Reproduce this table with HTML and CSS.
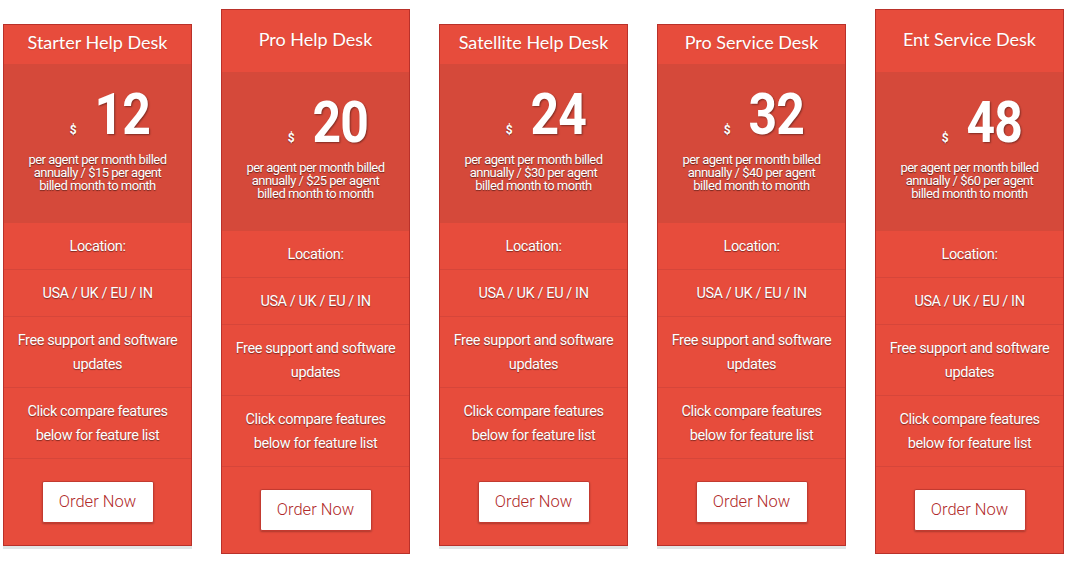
FILE: index.html
```html
<!DOCTYPE html>
<html lang="en">
<head>
  <meta charset="UTF-8">
  <meta name="viewport" content="width=device-width, initial-scale=1.0">
  <title>Help Desk Pricing</title>
  <link rel="stylesheet" href="styles.css">
</head>
<body>

  <div class="pricing">

    <div class="plan">
      <h3 class="plan-title">Starter Help Desk</h3>
      <div class="plan-price">
        <div class="amount"><span class="currency">$</span><span class="value">12</span></div>
        <p class="billing">per agent per month billed annually / $15 per agent billed month to month</p>
      </div>
      <ul class="plan-features">
        <li>Location:</li>
        <li>USA / UK / EU / IN</li>
        <li>Free support and software updates</li>
        <li>Click compare features below for feature list</li>
      </ul>
      <div class="plan-footer"><a href="#" class="btn">Order Now</a></div>
    </div>

    <div class="plan featured">
      <h3 class="plan-title">Pro Help Desk</h3>
      <div class="plan-price">
        <div class="amount"><span class="currency">$</span><span class="value">20</span></div>
        <p class="billing">per agent per month billed annually / $25 per agent billed month to month</p>
      </div>
      <ul class="plan-features">
        <li>Location:</li>
        <li>USA / UK / EU / IN</li>
        <li>Free support and software updates</li>
        <li>Click compare features below for feature list</li>
      </ul>
      <div class="plan-footer"><a href="#" class="btn">Order Now</a></div>
    </div>

    <div class="plan">
      <h3 class="plan-title">Satellite Help Desk</h3>
      <div class="plan-price">
        <div class="amount"><span class="currency">$</span><span class="value">24</span></div>
        <p class="billing">per agent per month billed annually / $30 per agent billed month to month</p>
      </div>
      <ul class="plan-features">
        <li>Location:</li>
        <li>USA / UK / EU / IN</li>
        <li>Free support and software updates</li>
        <li>Click compare features below for feature list</li>
      </ul>
      <div class="plan-footer"><a href="#" class="btn">Order Now</a></div>
    </div>

    <div class="plan">
      <h3 class="plan-title">Pro Service Desk</h3>
      <div class="plan-price">
        <div class="amount"><span class="currency">$</span><span class="value">32</span></div>
        <p class="billing">per agent per month billed annually / $40 per agent billed month to month</p>
      </div>
      <ul class="plan-features">
        <li>Location:</li>
        <li>USA / UK / EU / IN</li>
        <li>Free support and software updates</li>
        <li>Click compare features below for feature list</li>
      </ul>
      <div class="plan-footer"><a href="#" class="btn">Order Now</a></div>
    </div>

    <div class="plan featured">
      <h3 class="plan-title">Ent Service Desk</h3>
      <div class="plan-price">
        <div class="amount"><span class="currency">$</span><span class="value">48</span></div>
        <p class="billing">per agent per month billed annually / $60 per agent billed month to month</p>
      </div>
      <ul class="plan-features">
        <li>Location:</li>
        <li>USA / UK / EU / IN</li>
        <li>Free support and software updates</li>
        <li>Click compare features below for feature list</li>
      </ul>
      <div class="plan-footer"><a href="#" class="btn">Order Now</a></div>
    </div>

  </div>

</body>
</html>
```

FILE: styles.css
```css
* {
  margin: 0;
  padding: 0;
  box-sizing: border-box;
}

body {
  font-family: Roboto, "Liberation Sans", sans-serif;
  background: #fff;
}

.pricing {
  display: flex;
  align-items: flex-start;
  gap: 29px;
  padding: 9px 0 0 3px;
}

.plan {
  width: 189px;
  margin-top: 15px;
  background: #e74c3c;
  border: 1px solid #b9312a;
  box-shadow: 0 3px 0 #e1e6e6;
  color: #fff;
  text-align: center;
}

.plan-title {
  font-family: Lato, "Open Sans", sans-serif;
  font-weight: 400;
  font-size: 18px;
  line-height: 22px;
  padding: 6px 0 11px;
  text-shadow: 0 1px 1px rgba(0, 0, 0, 0.15);
}

.plan-price {
  background: #d5493a;
  height: 159px;
  padding-top: 20px;
}

.amount {
  display: flex;
  justify-content: center;
  align-items: baseline;
  padding-left: 29px;
}

.currency {
  font-size: 12px;
  font-weight: 700;
  margin-right: 13px;
  text-shadow: 0 1px 1px rgba(0, 0, 0, 0.4);
}

/* angka harga dibuat lebih ramping */
.value {
  display: inline-block;
  font-size: 58px;
  line-height: 60px;
  font-weight: 700;
  letter-spacing: -1px;
  transform: scaleX(0.86);
  text-shadow: 1px 1px 2px rgba(0, 0, 0, 0.4);
}

.billing {
  font-size: 13px;
  line-height: 13px;
  letter-spacing: -0.5px;
  padding: 9px 22px 0;
  text-shadow: 0 1px 1px rgba(0, 0, 0, 0.5);
}

.plan-features {
  list-style: none;
}

.plan-features li {
  font-size: 14.5px;
  line-height: 24px;
  letter-spacing: -0.4px;
  padding: 12px 12px 10px;
  border-bottom: 1px solid #d6463a;
  text-shadow: 0 1px 1px rgba(0, 0, 0, 0.45);
}

.plan-footer {
  padding: 22px 0;
}

.btn {
  display: inline-block;
  width: 112px;
  height: 42px;
  line-height: 40px;
  background: #fff;
  color: #b02a2a;
  border: 1px solid #c33a30;
  border-radius: 2px;
  box-shadow: 0 1px 2px rgba(0, 0, 0, 0.25);
  font-size: 16.5px;
  font-weight: 300;
  text-decoration: none;
}

.featured {
  margin-top: 0;
}

.featured .plan-title {
  padding: 18px 0 22px;
}
```
